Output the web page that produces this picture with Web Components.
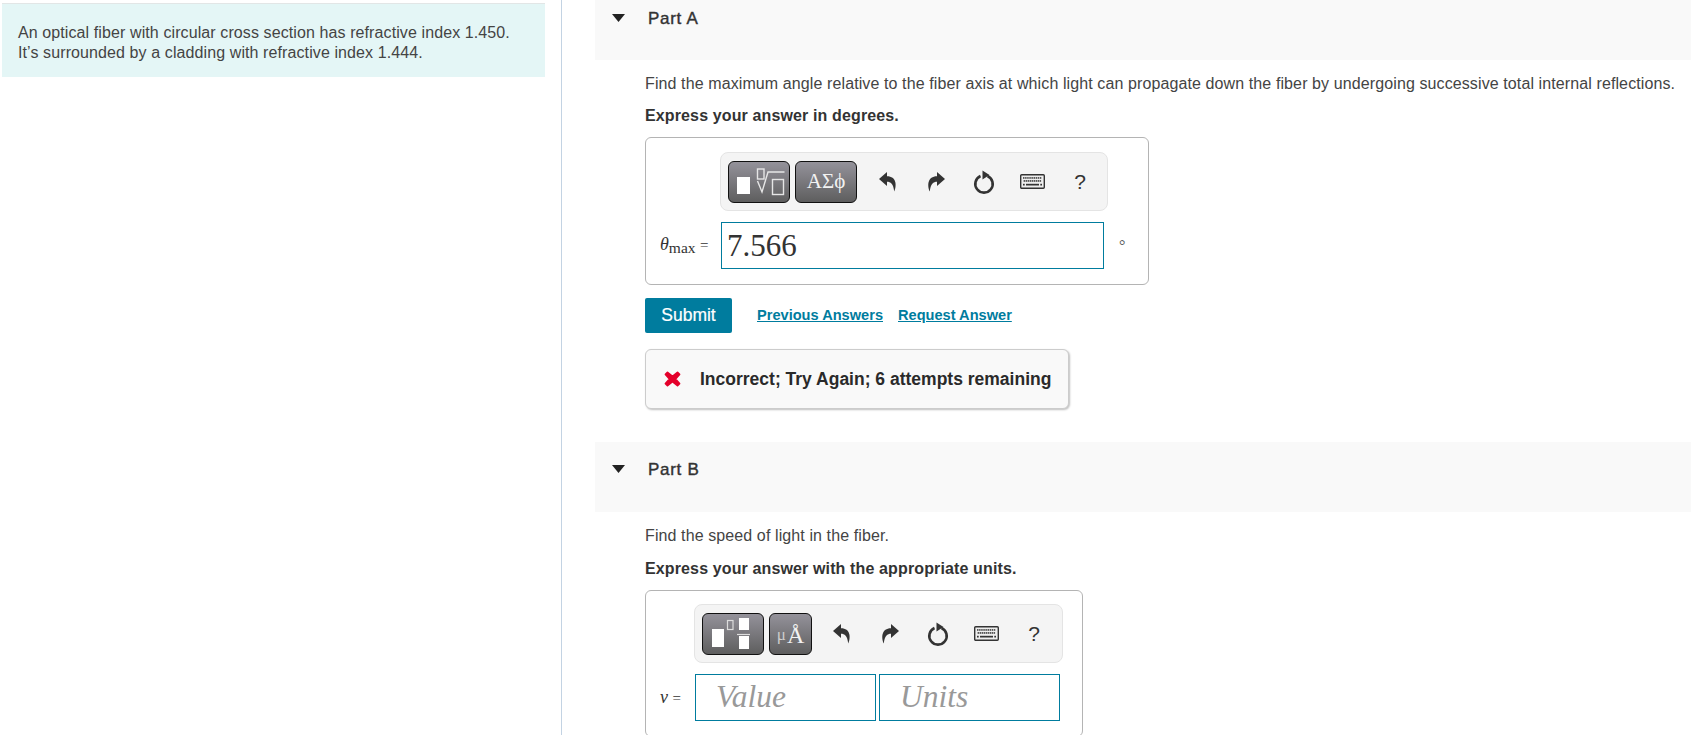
<!DOCTYPE html>
<html><head><meta charset="utf-8">
<style>
html,body{margin:0;padding:0;height:735px;overflow:hidden;background:#fff}
body{font-family:"Liberation Sans",Arial,sans-serif;color:#333}
</style></head>
<body>
<template id="t-page"><style>
:host{display:grid;grid-template-columns:561px 1px 1fr;height:735px;overflow:hidden}
.left{padding:3px 16px 0 2px}
.rule{background:#c3d3e3}
.right{padding-left:33px;min-width:0}
</style><div class="left"><slot name="intro"></slot></div><div class="rule"></div><div class="right"><slot></slot></div></template>

<template id="t-intro"><style>
:host{display:block;background:#e4f6f6;border-top:1px solid #e2e6e6;padding:19px 16px 18px;height:36px;font-size:16px;line-height:20px;color:#444;letter-spacing:.1px}
</style><slot></slot></template>

<template id="t-part"><style>
:host{display:block}
.band{background:#f9f9f9;display:flex;align-items:flex-start;gap:23px;padding:0 0 0 17px;box-sizing:border-box;height:var(--band,60px);padding-top:var(--top,10px)}
svg{margin-top:4px;flex:none}
h2{margin:0;font-size:17px;line-height:18px;font-weight:400;color:#333;-webkit-text-stroke:.4px #333;letter-spacing:.7px}
.body{padding:var(--body-top,15px) 0 0 50px}
</style><div class="band"><svg width="13" height="8" viewBox="0 0 13 8"><path d="M0 0H13L6.500 8Z" fill="#222"/></svg><h2><slot name="title"></slot></h2></div><div class="body"><slot></slot></div></template>

<template id="t-prompt"><style>
:host{display:block;font-size:16px;line-height:18px;color:#444;white-space:nowrap;letter-spacing:.105px}
p{margin:0}
.b{margin-top:var(--bm,14px);font-weight:700;font-size:16px;letter-spacing:.13px;color:#333}
</style><p><slot></slot></p><p class="b"><slot name="ask"></slot></p></template>

<template id="t-box"><style>
:host{display:block;box-sizing:border-box;border:1.5px solid #b4b4b4;border-radius:6px;background:#fff;margin-top:12px;width:var(--w,504px);padding:var(--pt,14px) 0 15px 14px}
.tools{display:flex;padding-left:var(--tl,60px)}
.row{display:flex;align-items:center;margin-top:var(--rm,11px)}
.lab{width:var(--lw,61px);flex:none}
</style><div class="tools"><slot name="tools"></slot></div><div class="row"><div class="lab"><slot name="label"></slot></div><slot></slot></div></template>

<template id="t-toolbar"><style>
:host{display:flex;align-items:center;box-sizing:border-box;height:59px;width:var(--tw,388px);background:#f4f4f4;border:1px solid #e4e4e4;border-radius:8px;padding-left:7px}
.g{display:flex;gap:5px;margin-right:var(--gm,7px)}
</style><div class="g"><slot name="pal"></slot></div><slot></slot></template>

<template id="t-pal"><style>
:host{display:flex;align-items:center;justify-content:center;box-sizing:border-box;height:42px;width:var(--pw,62px);border:1px solid #111;border-radius:6px;background:linear-gradient(#94929a,#5e5e5e);color:#f2f2f2;font-family:"Liberation Serif",serif;font-size:21px;white-space:nowrap}
</style><slot></slot></template>

<template id="t-tool"><style>
:host{display:flex;align-items:center;justify-content:center;width:48px;height:42px;font-size:21px;color:#333;flex:none}
</style><slot></slot></template>

<template id="t-field"><style>
:host{display:block;box-sizing:border-box;border:1px solid #007c9e;height:47px;width:var(--fw,383px);font-family:"Liberation Serif",serif;font-size:31px;line-height:45px;padding-left:var(--pl,5px);color:#333;background:#fff;margin-right:3px;white-space:nowrap}
:host([ph]){font-style:italic;color:#999;padding-left:20px;font-size:31.500px;line-height:43px}
</style><slot></slot></template>

<template id="t-actions"><style>
:host{display:flex;align-items:center;margin-top:13px;height:35px}
.s{box-sizing:border-box;width:87px;height:35px;background:#007c9e;border-radius:2px;color:#fff;font-size:17.500px;display:flex;align-items:center;justify-content:center;-webkit-text-stroke:.2px #fff;margin-right:25px;padding-bottom:1px}
a{color:#007c9e;font-size:14.600px;font-weight:700;text-decoration:underline;margin-right:15px;position:relative;top:-1px}
</style><div class="s">Submit</div><a href="#">Previous Answers</a><a href="#">Request Answer</a></template>

<template id="t-feedback"><style>
:host{display:flex;align-items:center;box-sizing:border-box;width:424px;height:60px;margin-top:16px;background:#f9f9f9;border:1px solid #ccc;border-radius:6px;box-shadow:1px 1px 2px rgba(0,0,0,.25);padding-left:18px;font-size:17.500px;font-weight:700;color:#2a2a2a;white-space:nowrap}
svg{margin-right:19px;flex:none}
</style><svg width="17" height="16" viewBox="0 0 17 16"><path d="M1.500 3.500 3.500 1.500 8.500 5.500 13.500 1.500 15.500 3.500 11.500 8 15.500 12.500 13.500 14.500 8.500 10.500 3.500 14.500 1.500 12.500 5.500 8Z" fill="#e4002b" stroke="#e4002b" stroke-width="1.800" stroke-linejoin="round"/></svg><slot></slot></template>

<x-page>
<x-intro slot="intro">An optical fiber with circular cross section has refractive index 1.450.<br>It’s surrounded by a cladding with refractive index 1.444.</x-intro>

<x-part>
<span slot="title">Part A</span>
<x-prompt>Find the maximum angle relative to the fiber axis at which light can propagate down the fiber by undergoing successive total internal reflections.<span slot="ask">Express your answer in degrees.</span></x-prompt>
<x-box>
<x-toolbar slot="tools">
<x-pal slot="pal"><svg width="60" height="40" viewBox="0 0 60 40" fill="none" stroke="#e6e6e6" stroke-width="1.400"><rect x="8" y="15" width="13" height="17" fill="#fff" stroke="none"/><rect x="28.500" y="7" width="6.500" height="10"/><path d="M28.500 19l4.500 11 6-20h16.500"/><rect x="43.500" y="17.500" width="11" height="15"/></svg></x-pal>
<x-pal slot="pal">ΑΣϕ</x-pal>
<x-tool><x-undo></x-undo></x-tool><x-tool><x-undo flip></x-undo></x-tool><x-tool><x-reset></x-reset></x-tool><x-tool><x-keys></x-keys></x-tool><x-tool>?</x-tool>
</x-toolbar>
<span slot="label" style="font-family:'Liberation Serif',serif;font-size:18px;color:#333;white-space:nowrap;position:relative;top:-1px"><i>θ</i><span style="font-size:15.500px;position:relative;top:3px">max</span> <span style="font-size:15px">=</span></span>
<x-field>7.566</x-field>
<span style="font-size:16px;margin-left:12px;color:#555;font-family:'Liberation Serif',serif">°</span>
</x-box>
<x-actions></x-actions>
<x-feedback>Incorrect; Try Again; 6 attempts remaining</x-feedback>
</x-part>

<x-part style="--band:70px;--top:19px;--body-top:15px;--bm:15px;margin-top:33px">
<span slot="title">Part B</span>
<x-prompt>Find the speed of light in the fiber.<span slot="ask">Express your answer with the appropriate units.</span></x-prompt>
<x-box style="--w:438px;--tl:34px;--lw:35px;--tw:369px;--rm:11px;--pt:13px">
<x-toolbar slot="tools" style="--gm:6px">
<x-pal slot="pal"><svg width="60" height="40" viewBox="0 0 60 40"><rect x="9" y="15" width="12" height="18" fill="#fff"/><rect x="24.500" y="6.500" width="5.500" height="9" fill="none" stroke="#ddd" stroke-width="1.200"/><rect x="36" y="4" width="10" height="12" fill="#fff"/><path d="M34 20.500H47" stroke="#ddd" stroke-width="1.200"/><rect x="36" y="22" width="10" height="13" fill="#fff"/></svg></x-pal>
<x-pal slot="pal" style="--pw:43px;font-size:24px;padding-top:3px"><span style="font-size:17px;color:#ccc;margin-right:1px">μ</span>Å</x-pal>
<x-tool><x-undo></x-undo></x-tool><x-tool><x-undo flip></x-undo></x-tool><x-tool><x-reset></x-reset></x-tool><x-tool><x-keys></x-keys></x-tool><x-tool>?</x-tool>
</x-toolbar>
<span slot="label" style="font-family:'Liberation Serif',serif;font-size:18px;color:#333;white-space:nowrap"><i>v</i> <span style="font-size:15px">=</span></span>
<x-field ph style="--fw:181px">Value</x-field><x-field ph style="--fw:181px">Units</x-field>
</x-box>
</x-part>
</x-page>

<script>
class Base extends HTMLElement{
  connectedCallback(){
    if(this.shadowRoot)return;
    const r=this.attachShadow({mode:'open'});
    const t=document.getElementById('t-'+this.localName.slice(2));
    if(t)r.appendChild(t.content.cloneNode(true));
    else this.draw(r);
  }
}
for(const n of ['page','intro','part','prompt','box','toolbar','pal','tool','field','actions','feedback'])
  customElements.define('x-'+n,class extends Base{});
customElements.define('x-undo',class extends Base{draw(r){
  const f=this.hasAttribute('flip')?'transform:scaleX(-1);':'';
  r.innerHTML=`<style>:host{display:block;line-height:0}</style><svg style="${f}" width="18" height="20" viewBox="0 0 18 20"><path d="M8 0 0 7 8 14V9.800C11.500 9.800 14.500 12 15.200 19.500 18 13.500 17.500 4.200 8 4.200Z" fill="#333"/></svg>`;
}});
customElements.define('x-reset',class extends Base{draw(r){
  r.innerHTML=`<style>:host{display:block;line-height:0}</style><svg width="22" height="24" viewBox="0 0 22 24"><path d="M14.500 6A8.700 8.700 0 1 1 7.500 6" fill="none" stroke="#333" stroke-width="2.600"/><path d="M9.500 .5 16.500 5 9.500 9.500Z" fill="#333"/></svg>`;
}});
customElements.define('x-keys',class extends Base{draw(r){
  let d='';
  for(let i=0;i<9;i++)d+=`<rect x="${3+i*2.1}" y="3.200" width="1.500" height="1.500"/><rect x="${3.600+i*2}" y="6.200" width="1.500" height="1.500"/>`;
  r.innerHTML=`<style>:host{display:block;line-height:0}</style><svg width="25" height="15" viewBox="0 0 25 15" fill="#333"><rect x=".7" y=".7" width="23.600" height="13.600" rx="1" fill="#eee" stroke="#333" stroke-width="1.400"/>${d}<rect x="6" y="9.800" width="13" height="1.700"/><rect x="3" y="9.800" width="1.700" height="1.700"/><rect x="20.300" y="9.800" width="1.700" height="1.700"/></svg>`;
}});
</script>
</body></html>
